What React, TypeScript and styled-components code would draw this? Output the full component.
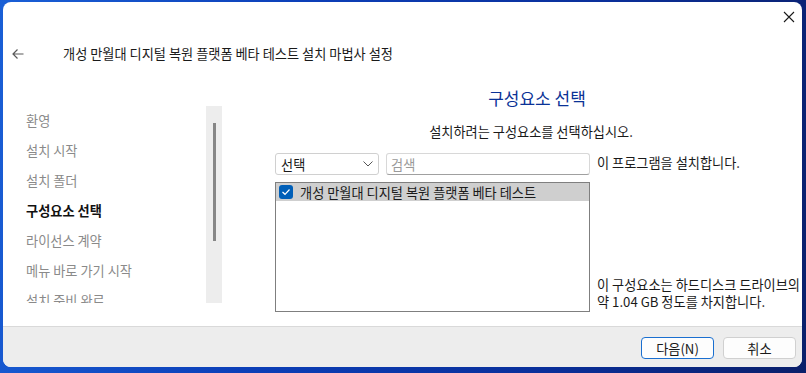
import React from "react";
import styled, { createGlobalStyle } from "styled-components";

const Global = createGlobalStyle`
  html, body { margin: 0; padding: 0; }
  body {
    width: 806px;
    height: 373px;
    overflow: hidden;
    background: linear-gradient(100deg, #1a5fd6 0%, #0c3fb8 35%, #0a2f9a 70%, #0a1f6a 100%);
    font-family: "Noto Sans CJK KR", "Noto Sans", sans-serif;
  }
`;

const FS = "13.2px";

const Window = styled.div`
  margin: 2px 0 0 3px;
  width: 799px;
  height: 365px;
  background: #ffffff;
  border-radius: 8px;
  overflow: hidden;
  display: flex;
  flex-direction: column;
`;

const TopBar = styled.div`
  height: 34px;
  display: flex;
  justify-content: flex-end;
  align-items: flex-start;
`;

const CloseButton = styled.div`
  width: 46px;
  height: 30px;
  display: flex;
  align-items: center;
  justify-content: center;
  margin-right: -10px;
  color: #1a1a1a;
`;

const Header = styled.div`
  height: 36px;
  display: flex;
  align-items: center;
  padding-left: 9px;
`;

const BackArrow = styled.div`
  width: 12px;
  height: 12px;
  display: flex;
  align-items: center;
  color: #5a5a5a;
  margin-right: 39px;
`;

const Title = styled.div`
  font-size: ${FS};
  color: #1a1a1a;
  line-height: 18px;
`;

const Body = styled.div`
  flex: 1;
  display: flex;
  min-height: 0;
`;

const Sidebar = styled.div`
  width: 219px;
  display: flex;
  padding: 34px 0 0 23px;
  box-sizing: border-box;
`;

const Nav = styled.div`
  width: 180px;
  height: 197px;
  overflow: hidden;
  display: flex;
  flex-direction: column;
`;

const NavItem = styled.div<{ $active?: boolean }>`
  height: 30px;
  line-height: 30px;
  font-size: ${FS};
  color: ${(p) => (p.$active ? "#111111" : "#8a8a8a")};
  font-weight: ${(p) => (p.$active ? 700 : 400)};
  white-space: nowrap;
`;

const Track = styled.div`
  width: 16px;
  height: 197px;
  background: #ededed;
  display: flex;
  justify-content: center;
  padding-top: 17px;
  box-sizing: border-box;
`;

const Thumb = styled.div`
  width: 3px;
  height: 118px;
  background: #868686;
`;

const Main = styled.div`
  flex: 1;
  display: flex;
  flex-direction: column;
  padding: 15px 0 0 53px;
`;

const Heading = styled.div`
  text-align: center;
  font-size: 17px;
  line-height: 22px;
  color: #0a3296;
  padding-right: 3px;
`;

const Subtitle = styled.div`
  margin-top: 14px;
  text-align: center;
  font-size: ${FS};
  line-height: 18px;
  color: #1a1a1a;
  padding-right: 15px;
`;

const ControlRow = styled.div`
  margin-top: 12px;
  display: flex;
  align-items: center;
  height: 22px;
`;

const Select = styled.div`
  width: 104px;
  height: 22px;
  box-sizing: border-box;
  border: 1px solid #d0d0d0;
  border-radius: 3px;
  display: flex;
  align-items: center;
  justify-content: space-between;
  padding: 0 5px 0 5px;
  font-size: ${FS};
  color: #1a1a1a;
`;

const Search = styled.div`
  margin-left: 7px;
  width: 204px;
  height: 22px;
  box-sizing: border-box;
  border: 1px solid #d8d8d8;
  border-bottom-color: #a0a0a0;
  border-radius: 3px;
  display: flex;
  align-items: center;
  padding-left: 4px;
  font-size: ${FS};
  color: #9a9a9a;
`;

const SideText = styled.div`
  margin-left: 7px;
  font-size: ${FS};
  line-height: 17px;
  color: #1a1a1a;
  white-space: nowrap;
`;

const PromptText = styled(SideText)`
  margin-top: -3px;
`;

const ListRow = styled.div`
  margin-top: 7px;
  display: flex;
  align-items: stretch;
`;

const ListBox = styled.div`
  width: 315px;
  height: 130px;
  box-sizing: border-box;
  border: 1px solid #7f7f7f;
  display: flex;
  flex-direction: column;
`;

const ListItem = styled.div<{ $selected?: boolean }>`
  height: 18px;
  display: flex;
  align-items: center;
  background: ${(p) => (p.$selected ? "#cfcfcf" : "transparent")};
  padding-left: 3px;
  font-size: ${FS};
  color: #1a1a1a;
  white-space: nowrap;
`;

const Check = styled.div`
  width: 14px;
  height: 14px;
  border-radius: 3px;
  background: #005fb8;
  display: flex;
  align-items: center;
  justify-content: center;
  margin-right: 7px;
`;

const Info = styled.div`
  display: flex;
  flex-direction: column;
  justify-content: flex-end;
  padding-bottom: 2px;
`;

const Footer = styled.div`
  height: 41px;
  box-sizing: border-box;
  border-top: 1px solid #d9d9d9;
  background: #ededed;
  display: flex;
  justify-content: flex-end;
  align-items: flex-start;
  padding: 10px 6px 0 0;
  gap: 9px;
`;

const Button = styled.div<{ $primary?: boolean }>`
  width: 73px;
  height: 22px;
  box-sizing: border-box;
  border-radius: 4px;
  border: 1px solid ${(p) => (p.$primary ? "#1a6fd0" : "#d0d0d0")};
  background: #fdfdfd;
  display: flex;
  align-items: center;
  justify-content: center;
  font-size: ${FS};
  color: #1a1a1a;
`;

const steps = [
  "환영",
  "설치 시작",
  "설치 폴더",
  "구성요소 선택",
  "라이선스 계약",
  "메뉴 바로 가기 시작",
  "설치 준비 완료",
];

export default function App() {
  return (
    <>
      <Global />
      <Window>
        <TopBar>
          <CloseButton>
            <svg width="12" height="12" viewBox="0 0 12 12">
              <path d="M1 1L11 11M11 1L1 11" stroke="#1a1a1a" strokeWidth="1.1" />
            </svg>
          </CloseButton>
        </TopBar>
        <Header>
          <BackArrow>
            <svg width="12" height="12" viewBox="0 0 12 12">
              <path d="M11.5 6H1M5.5 1.5L1 6L5.5 10.5" stroke="#5a5a5a" strokeWidth="1.2" fill="none" />
            </svg>
          </BackArrow>
          <Title>개성 만월대 디지털 복원 플랫폼 베타 테스트 설치 마법사 설정</Title>
        </Header>
        <Body>
          <Sidebar>
            <Nav>
              {steps.map((s) => (
                <NavItem key={s} $active={s === "구성요소 선택"}>
                  {s}
                </NavItem>
              ))}
            </Nav>
            <Track>
              <Thumb />
            </Track>
          </Sidebar>
          <Main>
            <Heading>구성요소 선택</Heading>
            <Subtitle>설치하려는 구성요소를 선택하십시오.</Subtitle>
            <ControlRow>
              <Select>
                <span>선택</span>
                <svg width="10" height="6" viewBox="0 0 10 6">
                  <path d="M0.5 0.5L5 5L9.5 0.5" stroke="#555" strokeWidth="1" fill="none" />
                </svg>
              </Select>
              <Search>검색</Search>
              <PromptText>이 프로그램을 설치합니다.</PromptText>
            </ControlRow>
            <ListRow>
              <ListBox>
                <ListItem $selected>
                  <Check>
                    <svg width="10" height="8" viewBox="0 0 10 8">
                      <path d="M1.5 4L4 6.3L8.5 1.5" stroke="#fff" strokeWidth="1.2" fill="none" />
                    </svg>
                  </Check>
                  개성 만월대 디지털 복원 플랫폼 베타 테스트
                </ListItem>
              </ListBox>
              <Info>
                <SideText>이 구성요소는 하드디스크 드라이브의</SideText>
                <SideText>약 1.04 GB 정도를 차지합니다.</SideText>
              </Info>
            </ListRow>
          </Main>
        </Body>
        <Footer>
          <Button $primary>다음(N)</Button>
          <Button>취소</Button>
        </Footer>
      </Window>
    </>
  );
}
